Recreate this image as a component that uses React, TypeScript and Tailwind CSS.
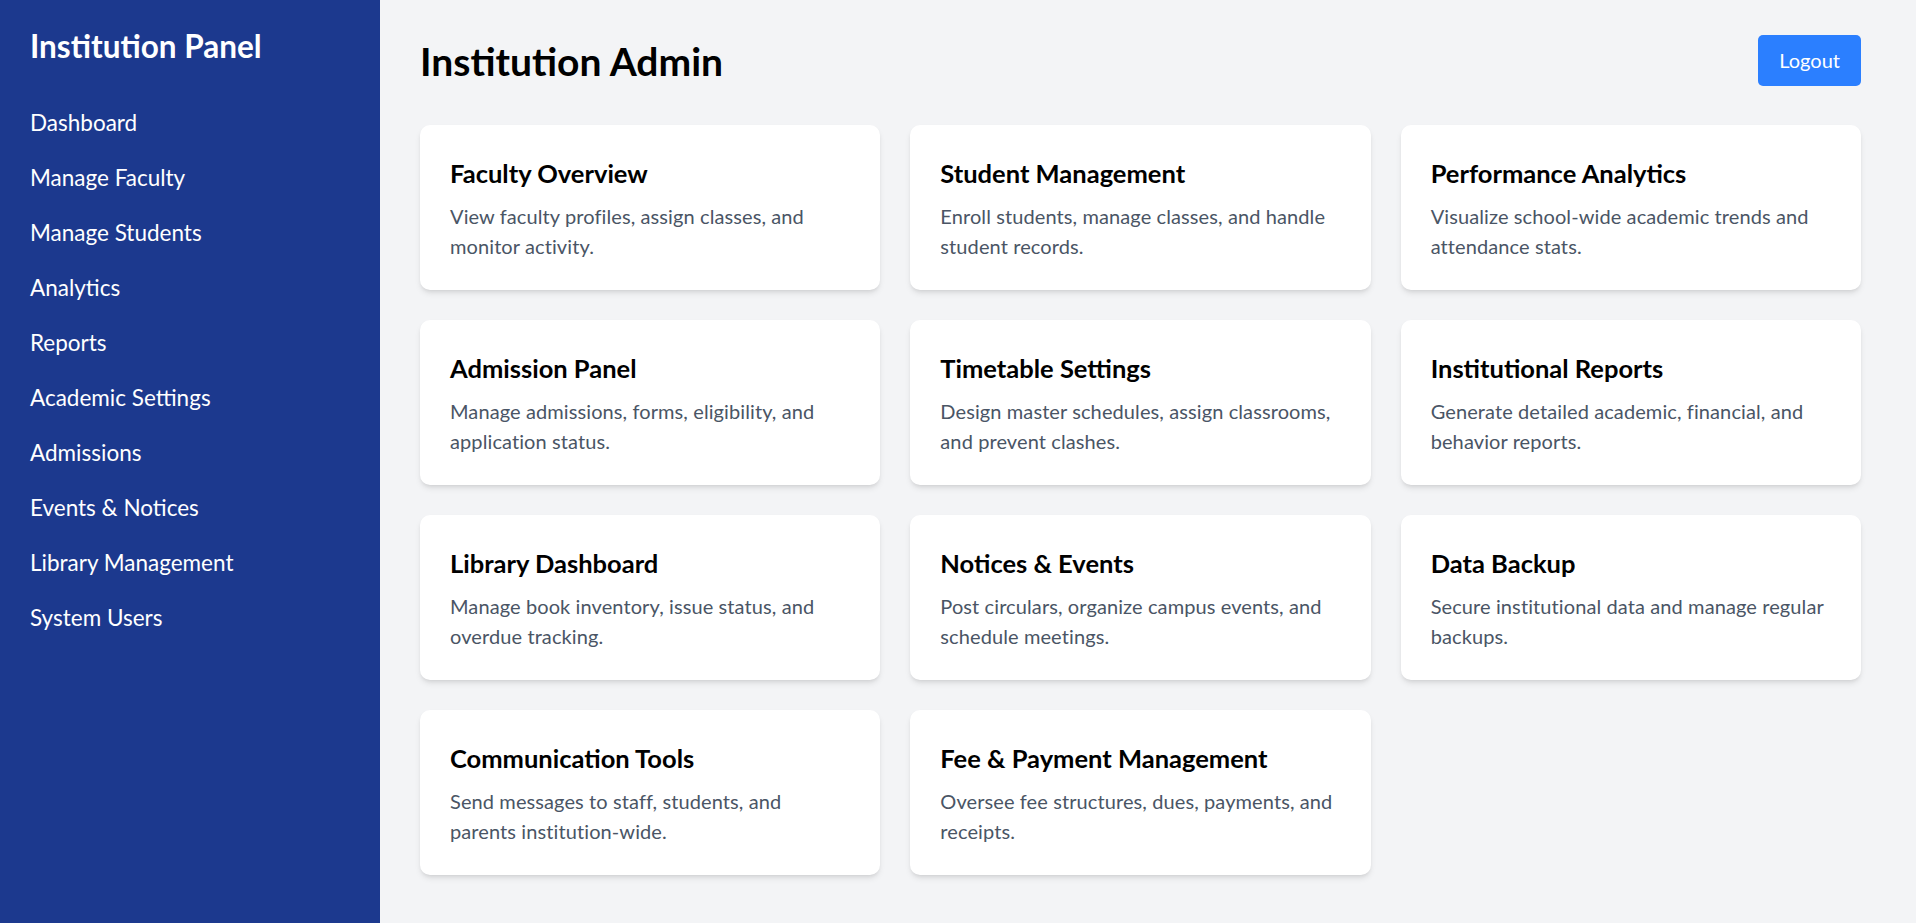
const navItems = [
  'Dashboard',
  'Manage Faculty',
  'Manage Students',
  'Analytics',
  'Reports',
  'Academic Settings',
  'Admissions',
  'Events & Notices',
  'Library Management',
  'System Users',
]

const cards = [
  { title: 'Faculty Overview', desc: 'View faculty profiles, assign classes, and monitor activity.' },
  { title: 'Student Management', desc: 'Enroll students, manage classes, and handle student records.' },
  { title: 'Performance Analytics', desc: 'Visualize school-wide academic trends and attendance stats.' },
  { title: 'Admission Panel', desc: 'Manage admissions, forms, eligibility, and application status.' },
  { title: 'Timetable Settings', desc: 'Design master schedules, assign classrooms, and prevent clashes.' },
  { title: 'Institutional Reports', desc: 'Generate detailed academic, financial, and behavior reports.' },
  { title: 'Library Dashboard', desc: 'Manage book inventory, issue status, and overdue tracking.' },
  { title: 'Notices & Events', desc: 'Post circulars, organize campus events, and schedule meetings.' },
  { title: 'Data Backup', desc: 'Secure institutional data and manage regular backups.' },
  { title: 'Communication Tools', desc: 'Send messages to staff, students, and parents institution-wide.' },
  { title: 'Fee & Payment Management', desc: 'Oversee fee structures, dues, payments, and receipts.' },
]

export default function App() {
  return (
    <div
      className="flex min-h-[992px] bg-gray-100"
      style={{ fontFamily: 'Lato, "Open Sans", sans-serif' }}
    >
      {/* sidebar */}
      <aside className="w-[380px] shrink-0 bg-blue-900 px-[30px] pt-[26px] text-white">
        <h2 className="mb-[38px] text-[31.5px] leading-[41px] font-bold">Institution Panel</h2>
        <nav>
          <ul className="flex flex-col gap-[20px]">
            {navItems.map((item) => (
              <li key={item} className="text-[22.5px] leading-[35px]">
                {item}
              </li>
            ))}
          </ul>
        </nav>
      </aside>

      {/* main content */}
      <main className="flex-1 pt-[35px] pr-[55px] pb-[40px] pl-[40px]">
        <div className="mb-[39px] flex items-center justify-between">
          <h1 className="pt-[2px] text-[39px] leading-[45px] font-bold text-black">Institution Admin</h1>
          <button className="rounded-[5px] bg-blue-500 px-[21px] py-[10px] text-[20px] leading-[31px] text-white">
            Logout
          </button>
        </div>

        <div className="grid grid-cols-3 gap-[30px]">
          {cards.map((card) => (
            <div key={card.title} className="rounded-[10px] bg-white px-[30px] pt-[31px] pb-[29px] shadow-md">
              <h3 className="mb-[10px] text-[25.5px] leading-[35px] font-bold text-black">{card.title}</h3>
              <p className="text-[20px] leading-[30px] tracking-[0.1px] text-gray-600">{card.desc}</p>
            </div>
          ))}
        </div>
      </main>
    </div>
  )
}
